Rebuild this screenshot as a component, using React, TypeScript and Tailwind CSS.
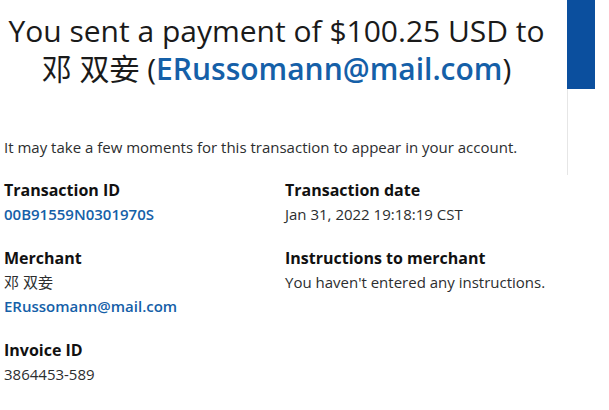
export default function App() {
  const font = { fontFamily: '"Open Sans", "Noto Sans CJK SC", sans-serif' };
  return (
    <div className="w-[609px] h-[410px] bg-white flex overflow-hidden text-[#2c2e2f]" style={font}>
      <div className="w-[553px] shrink-0 flex flex-col">
        <h1 className="pt-[12px] text-center text-[30px] leading-[38px] font-normal text-[#1a1a1a]">
          You sent a payment of $100.25 USD to
          <br />
          邓 双妾 (<span className="font-semibold text-[#1560a8]">ERussomann@mail.com</span>)
        </h1>
        <p className="mt-[49px] pl-[4px] text-[15px] leading-[20px] text-[#2c2e2f]">
          It may take a few moments for this transaction to appear in your account.
        </p>
        <div className="mt-[21px] pl-[4px] grid grid-cols-[281px_1fr] gap-y-[20px] text-[15px] leading-[24px]">
          <div>
            <div className="text-[16px] font-bold text-[#111]">Transaction ID</div>
            <div className="font-semibold text-[#1560a8]">00B91559N0301970S</div>
          </div>
          <div>
            <div className="text-[16px] font-bold text-[#111]">Transaction date</div>
            <div>Jan 31, 2022 19:18:19 CST</div>
          </div>
          <div>
            <div className="text-[16px] font-bold text-[#111]">Merchant</div>
            <div>邓 双妾</div>
            <div className="font-semibold text-[#1560a8]">ERussomann@mail.com</div>
          </div>
          <div>
            <div className="text-[16px] font-bold text-[#111]">Instructions to merchant</div>
            <div>You haven't entered any instructions.</div>
          </div>
          <div>
            <div className="text-[16px] font-bold text-[#111]">Invoice ID</div>
            <div>3864453-589</div>
          </div>
        </div>
      </div>
      <div className="ml-[14px] w-[28px] flex flex-col">
        <div className="h-[89px] bg-[#0b4f9e]" />
        <div className="h-[86px] border-l border-[#e6e6e6]" />
      </div>
    </div>
  );
}
